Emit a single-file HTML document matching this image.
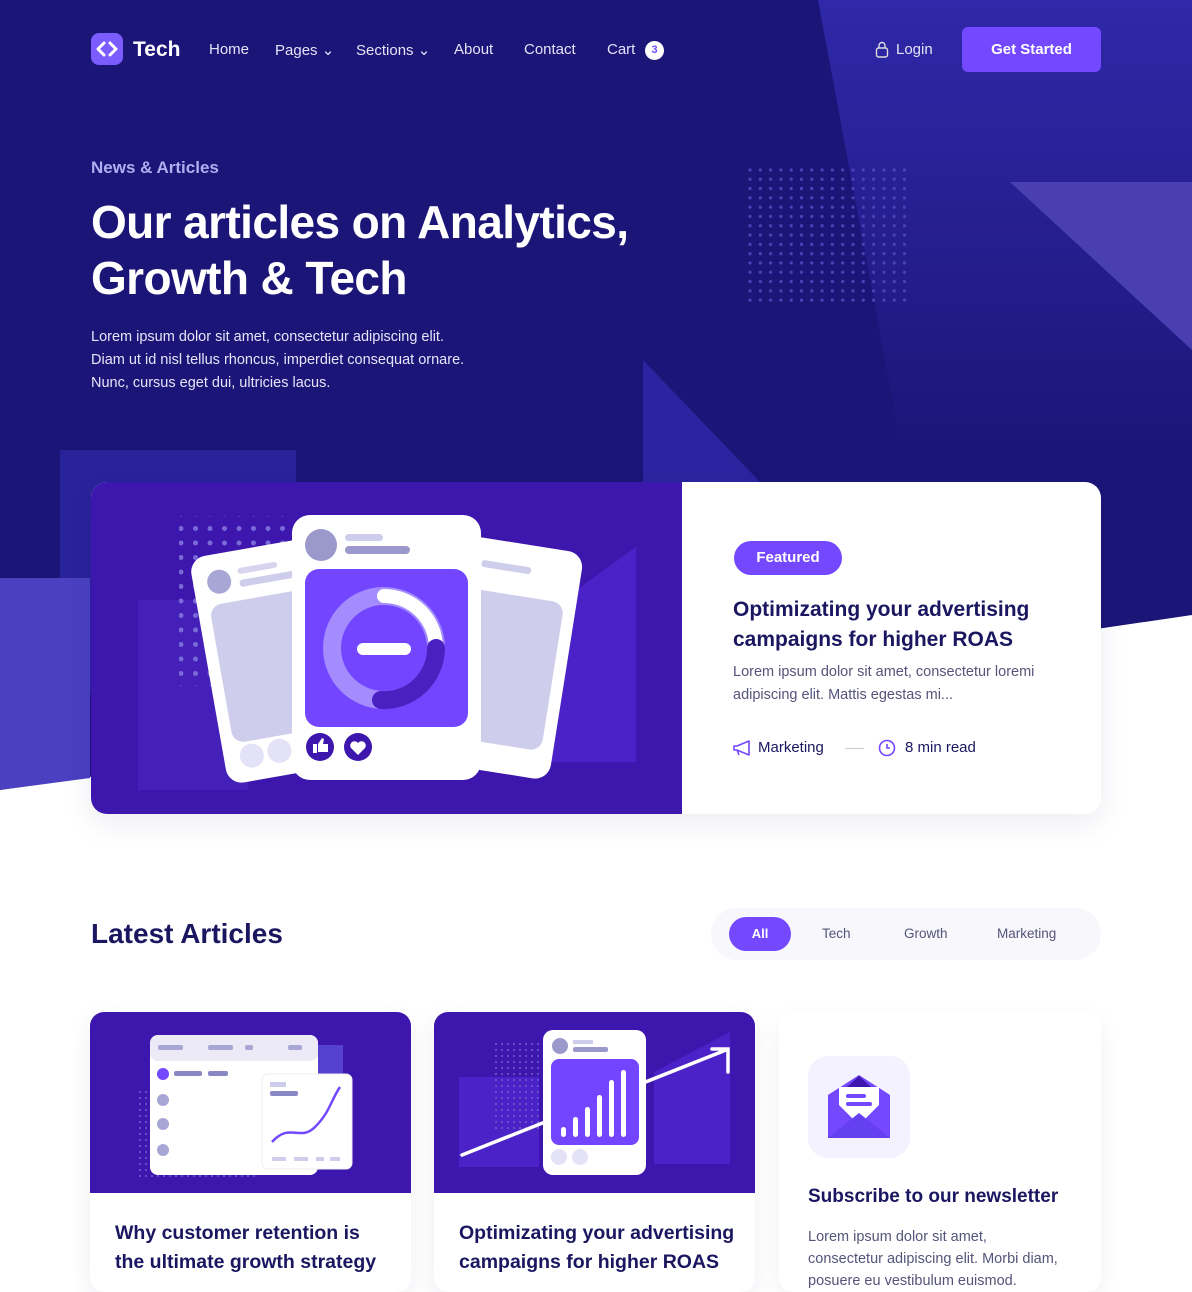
<!DOCTYPE html>
<html><head><meta charset="utf-8"><style>
*{margin:0;padding:0;box-sizing:border-box}
body{width:1192px;height:1280px;overflow:hidden;background:#fff;font-family:"Liberation Sans",sans-serif;position:relative}
.a{position:absolute}
.nav{color:#e4e2f7;font-size:15px;top:41px}
.dark{color:#1a1660}
</style></head><body>
<svg class="a" style="left:0;top:0" width="1192" height="1280">
<defs><linearGradient id="g1" x1="0" y1="0" x2="0" y2="1"><stop offset="0" stop-color="#2f28a8"/><stop offset="1" stop-color="#1c1578"/></linearGradient></defs>
<polygon points="0,0 1192,0 1192,615 0,790" fill="#1c1578"/>
<polygon points="818,0 1192,0 1192,450 900,440" fill="url(#g1)"/>
<polygon points="1010,182 1192,182 1192,350" fill="#4a3fb0"/>
<polygon points="643,360 643,482 760,482" fill="#2a24a0"/>
<rect x="60" y="450" width="236" height="244" fill="#29239a"/>
<polygon points="0,578 90,578 90,778 0,790" fill="#4a40c0"/>
</svg>
<svg class="a" style="left:748;top:168" width="160" height="135">
<defs><pattern id="d" width="10.3" height="9.3" patternUnits="userSpaceOnUse"><circle cx="2" cy="2" r="1.6" fill="#4c42b8"/></pattern></defs>
<rect width="158" height="134" fill="url(#d)"/>
</svg>
<!-- nav -->
<div class="a" style="left:91px;top:33px;width:32px;height:32px;border-radius:8px;background:#7a5cff"></div>
<svg class="a" style="left:91px;top:33px" width="32" height="32"><path d="M13 10 L7 16 L13 22 M19 10 L25 16 L19 22" stroke="#fff" stroke-width="3" fill="none" stroke-linecap="round" stroke-linejoin="round"/></svg>
<div class="a" style="left:133px;top:38px;color:#fff;font-size:21px;font-weight:bold">Tech</div>
<div class="a nav" style="left:209px">Home</div>
<div class="a nav" style="left:275px">Pages ⌄</div>
<div class="a nav" style="left:356px">Sections ⌄</div>
<div class="a nav" style="left:454px">About</div>
<div class="a nav" style="left:524px">Contact</div>
<div class="a nav" style="left:607px">Cart</div>
<div class="a" style="left:645px;top:41px;width:19px;height:19px;border-radius:50%;background:#fff;color:#6a4cff;font-size:11px;text-align:center;line-height:19px;font-weight:bold">3</div>
<svg class="a" style="left:875px;top:41px" width="14" height="17"><rect x="1.5" y="7" width="11" height="9" rx="2" stroke="#ddd" stroke-width="1.4" fill="none"/><path d="M4 7V4.5a3 3 0 0 1 6 0V7" stroke="#ddd" stroke-width="1.4" fill="none"/></svg>
<div class="a nav" style="left:896px">Login</div>
<div class="a" style="left:962px;top:27px;width:139px;height:45px;border-radius:6px;background:#7348ff;color:#fff;font-size:15px;font-weight:bold;text-align:center;line-height:45px">Get Started</div>
<!-- hero -->
<div class="a" style="left:91px;top:158px;color:#b0aef0;font-size:17px;font-weight:bold">News &amp; Articles</div>
<div class="a" style="left:91px;top:194px;color:#fff;font-size:46px;font-weight:bold;line-height:56px;letter-spacing:-0.6px">Our articles on Analytics,<br>Growth &amp; Tech</div>
<div class="a" style="left:91px;top:326px;color:#e6e4f8;font-size:14.5px;line-height:23px">Lorem ipsum dolor sit amet, consectetur adipiscing elit.<br>Diam ut id nisl tellus rhoncus, imperdiet consequat ornare.<br>Nunc, cursus eget dui, ultricies lacus.</div>
<!-- featured -->
<div class="a" style="left:91px;top:482px;width:1010px;height:332px;border-radius:16px;background:#fff;box-shadow:0 10px 30px rgba(30,20,100,.08);overflow:hidden">
<div class="a" style="left:0;top:0;width:591px;height:332px;background:#3c16ad"></div>
</div>
<svg class="a" style="left:91px;top:482px" width="591" height="332">
<polygon points="455,130 545,65 545,280 455,280" fill="#4a22c8"/>
<rect x="47" y="118" width="110" height="190" fill="#4520b8"/>
<defs><pattern id="d2" width="14.5" height="14.5" patternUnits="userSpaceOnUse"><circle cx="3" cy="3" r="2.5" fill="#7a6ad8"/></pattern></defs>
<rect x="88" y="34" width="110" height="170" fill="url(#d2)"/>
<g transform="rotate(-10 200 150)"><rect x="112" y="60" width="140" height="230" rx="16" fill="#fff"/><circle cx="138" cy="88" r="12" fill="#a8a6d4"/><rect x="158" y="78" width="40" height="6" rx="3" fill="#d6d4ee"/><rect x="158" y="90" width="60" height="7" rx="3" fill="#cfcdec"/><rect x="124" y="110" width="120" height="140" rx="12" fill="#cfcdec"/><circle cx="140" cy="265" r="12" fill="#e4e2f6"/><circle cx="168" cy="265" r="12" fill="#e4e2f6"/></g>
<g transform="rotate(9 400 150)"><rect x="340" y="58" width="140" height="230" rx="16" fill="#fff"/><rect x="360" y="110" width="108" height="150" rx="12" fill="#cfcdec"/><rect x="380" y="80" width="50" height="7" rx="3" fill="#cfcdec"/></g>
<rect x="201" y="33" width="189" height="265" rx="18" fill="#fff"/>
<circle cx="230" cy="63" r="16" fill="#9b99cc"/>
<rect x="254" y="52" width="38" height="7" rx="3.5" fill="#cfcdec"/>
<rect x="254" y="64" width="65" height="8" rx="4" fill="#9b99cc"/>
<rect x="214" y="87" width="163" height="158" rx="14" fill="#7345ff"/>
<circle cx="293" cy="166" r="52" fill="none" stroke="#a48cff" stroke-width="18"/>
<path d="M293 114 A52 52 0 0 1 345 166" stroke="#fff" stroke-width="14" fill="none" stroke-linecap="round"/>
<path d="M345 166 A52 52 0 0 1 290 218" stroke="#4a20c0" stroke-width="18" fill="none" stroke-linecap="round"/>
<rect x="266" y="161" width="54" height="12" rx="6" fill="#fff"/>
<circle cx="229" cy="265" r="14" fill="#3c16ad"/><path d="M222 262h4v9h-4zM227 262l4-6 2 1-1 5h5v8h-10z" fill="#fff"/>
<circle cx="267" cy="265" r="14" fill="#3c16ad"/><path d="M267 273l-7-7a4 4 0 0 1 7-5a4 4 0 0 1 7 5z" fill="#fff"/>
</svg>
<div class="a" style="left:734px;top:541px;width:108px;height:34px;border-radius:17px;background:#7348ff;color:#fff;font-size:15px;font-weight:bold;text-align:center;line-height:34px">Featured</div>
<div class="a dark" style="left:733px;top:595px;font-size:21px;font-weight:bold;line-height:30px">Optimizating your advertising<br>campaigns for higher ROAS</div>
<div class="a" style="left:733px;top:661px;color:#55547a;font-size:14.5px;line-height:23px">Lorem ipsum dolor sit amet, consectetur loremi<br>adipiscing elit. Mattis egestas mi...</div>
<svg class="a" style="left:732px;top:739px" width="20" height="18"><path d="M2 7h3l12-5v14L5 11H2z M5 11l2 5" stroke="#7348ff" stroke-width="1.6" fill="none" stroke-linejoin="round"/></svg>
<div class="a dark" style="left:758px;top:739px;font-size:15px">Marketing</div>
<div class="a" style="left:845px;top:748px;width:19px;height:1px;background:#ccc"></div>
<svg class="a" style="left:878px;top:739px" width="18" height="18"><circle cx="9" cy="9" r="7.5" stroke="#7348ff" stroke-width="1.6" fill="none"/><path d="M9 5v4h3" stroke="#7348ff" stroke-width="1.6" fill="none"/></svg>
<div class="a dark" style="left:905px;top:739px;font-size:15px">8 min read</div>
<!-- latest -->
<div class="a dark" style="left:91px;top:918px;font-size:28px;font-weight:bold">Latest Articles</div>
<div class="a" style="left:711px;top:908px;width:390px;height:52px;border-radius:26px;background:#f7f7fc"></div>
<div class="a" style="left:729px;top:917px;width:62px;height:34px;border-radius:17px;background:#7348ff;color:#fff;font-size:13px;font-weight:bold;text-align:center;line-height:34px">All</div>
<div class="a" style="left:822px;top:926px;color:#55547a;font-size:13.5px">Tech</div>
<div class="a" style="left:904px;top:926px;color:#55547a;font-size:13.5px">Growth</div>
<div class="a" style="left:997px;top:926px;color:#55547a;font-size:13.5px">Marketing</div>
<!-- cards -->
<div class="a" style="left:90px;top:1012px;width:321px;height:280px;border-radius:14px;background:#fff;box-shadow:0 8px 24px rgba(30,20,100,.07);overflow:hidden"><div style="height:181px;background:#3c16ad"></div></div>
<div class="a" style="left:434px;top:1012px;width:321px;height:280px;border-radius:14px;background:#fff;box-shadow:0 8px 24px rgba(30,20,100,.07);overflow:hidden"><div style="height:181px;background:#3c16ad"></div></div>
<div class="a" style="left:779px;top:1012px;width:322px;height:280px;border-radius:14px;background:#fff;box-shadow:0 8px 24px rgba(30,20,100,.06)"></div>
<svg class="a" style="left:90px;top:1012px" width="321" height="181">
<defs><pattern id="d3" width="6" height="6" patternUnits="userSpaceOnUse"><circle cx="2" cy="2" r="1" fill="#6e5ed0"/></pattern></defs>
<rect x="45" y="75" width="120" height="90" fill="url(#d3)"/>
<rect x="225" y="33" width="28" height="40" fill="#5540d0"/>
<rect x="60" y="23" width="168" height="140" rx="8" fill="#fff"/>
<rect x="60" y="23" width="168" height="26" rx="8" fill="#ebeaf6"/>
<g fill="#a8a6d4"><rect x="68" y="33" width="25" height="5" rx="2"/><rect x="118" y="33" width="25" height="5" rx="2"/><rect x="155" y="33" width="8" height="5" rx="2"/><rect x="198" y="33" width="14" height="5" rx="2"/>
<circle cx="73" cy="112" r="6"/><circle cx="73" cy="138" r="6"/><circle cx="73" cy="88" r="6"/></g>
<circle cx="73" cy="62" r="6" fill="#7348ff"/><rect x="84" y="59" width="28" height="5" rx="2" fill="#8a88c4"/><rect x="118" y="59" width="20" height="5" rx="2" fill="#8a88c4"/>
<rect x="172" y="62" width="90" height="95" rx="6" fill="#fff" stroke="#eee"/>
<rect x="180" y="70" width="16" height="5" fill="#cfcdec"/><rect x="180" y="79" width="28" height="5" rx="2" fill="#8a88c4"/>
<path d="M182 130 C200 110,210 130,225 115 C240 100,240 90,250 75" stroke="#7348ff" stroke-width="2.5" fill="none"/>
<g fill="#cfcdec"><rect x="182" y="145" width="14" height="4"/><rect x="204" y="145" width="14" height="4"/><rect x="226" y="145" width="8" height="4"/><rect x="240" y="145" width="10" height="4"/></g>
</svg>
<svg class="a" style="left:434px;top:1012px" width="321" height="181">
<rect x="25" y="65" width="80" height="90" fill="#4a22c8"/>
<polygon points="220,60 296,20 296,152 220,152" fill="#4a22c8"/>
<rect x="60" y="28" width="50" height="90" fill="url(#d3)"/>
<path d="M28 143 L292 38 M278 37 L294 37 L294 60" stroke="#fff" stroke-width="3.5" fill="none" stroke-linecap="round"/>
<rect x="109" y="18" width="103" height="145" rx="10" fill="#fff"/>
<circle cx="126" cy="34" r="8" fill="#9b99cc"/><rect x="139" y="28" width="20" height="4" fill="#cfcdec"/><rect x="139" y="35" width="35" height="5" rx="2" fill="#9b99cc"/>
<rect x="117" y="47" width="88" height="86" rx="8" fill="#7345ff"/>
<g fill="#fff"><rect x="127" y="115" width="5" height="10" rx="2.5"/><rect x="139" y="105" width="5" height="20" rx="2.5"/><rect x="151" y="95" width="5" height="30" rx="2.5"/><rect x="163" y="83" width="5" height="42" rx="2.5"/><rect x="175" y="68" width="5" height="57" rx="2.5"/><rect x="187" y="58" width="5" height="67" rx="2.5"/></g>
<circle cx="125" cy="145" r="8" fill="#e4e2f6"/><circle cx="146" cy="145" r="8" fill="#e4e2f6"/>
</svg>
<div class="a" style="left:808px;top:1056px;width:102px;height:102px;border-radius:20px;background:#f4f2ff"></div>
<svg class="a" style="left:827px;top:1075px" width="64" height="64"><path d="M1 20 L32 0 L63 20 V63 H1Z" fill="#7348ff"/><path d="M32 1 L44 12 H20Z" fill="#3c16ad"/><path d="M12 12 H52 V30 L32 50 L12 30Z" fill="#fff"/><rect x="19" y="19" width="20" height="4" rx="2" fill="#7348ff"/><rect x="19" y="27" width="26" height="4" rx="2" fill="#7348ff"/><path d="M1 63 L32 38 L63 63Z" fill="#6440f0"/></svg>
<div class="a dark" style="left:115px;top:1219px;font-size:19.5px;font-weight:bold;line-height:29px">Why customer retention is<br>the ultimate growth strategy</div>
<div class="a dark" style="left:459px;top:1219px;font-size:19.5px;font-weight:bold;line-height:29px">Optimizating your advertising<br>campaigns for higher ROAS</div>
<div class="a dark" style="left:808px;top:1186px;font-size:19px;font-weight:bold">Subscribe to our newsletter</div>
<div class="a" style="left:808px;top:1226px;color:#55547a;font-size:14.5px;line-height:22px">Lorem ipsum dolor sit amet,<br>consectetur adipiscing elit. Morbi diam,<br>posuere eu vestibulum euismod.</div>
</body></html>
